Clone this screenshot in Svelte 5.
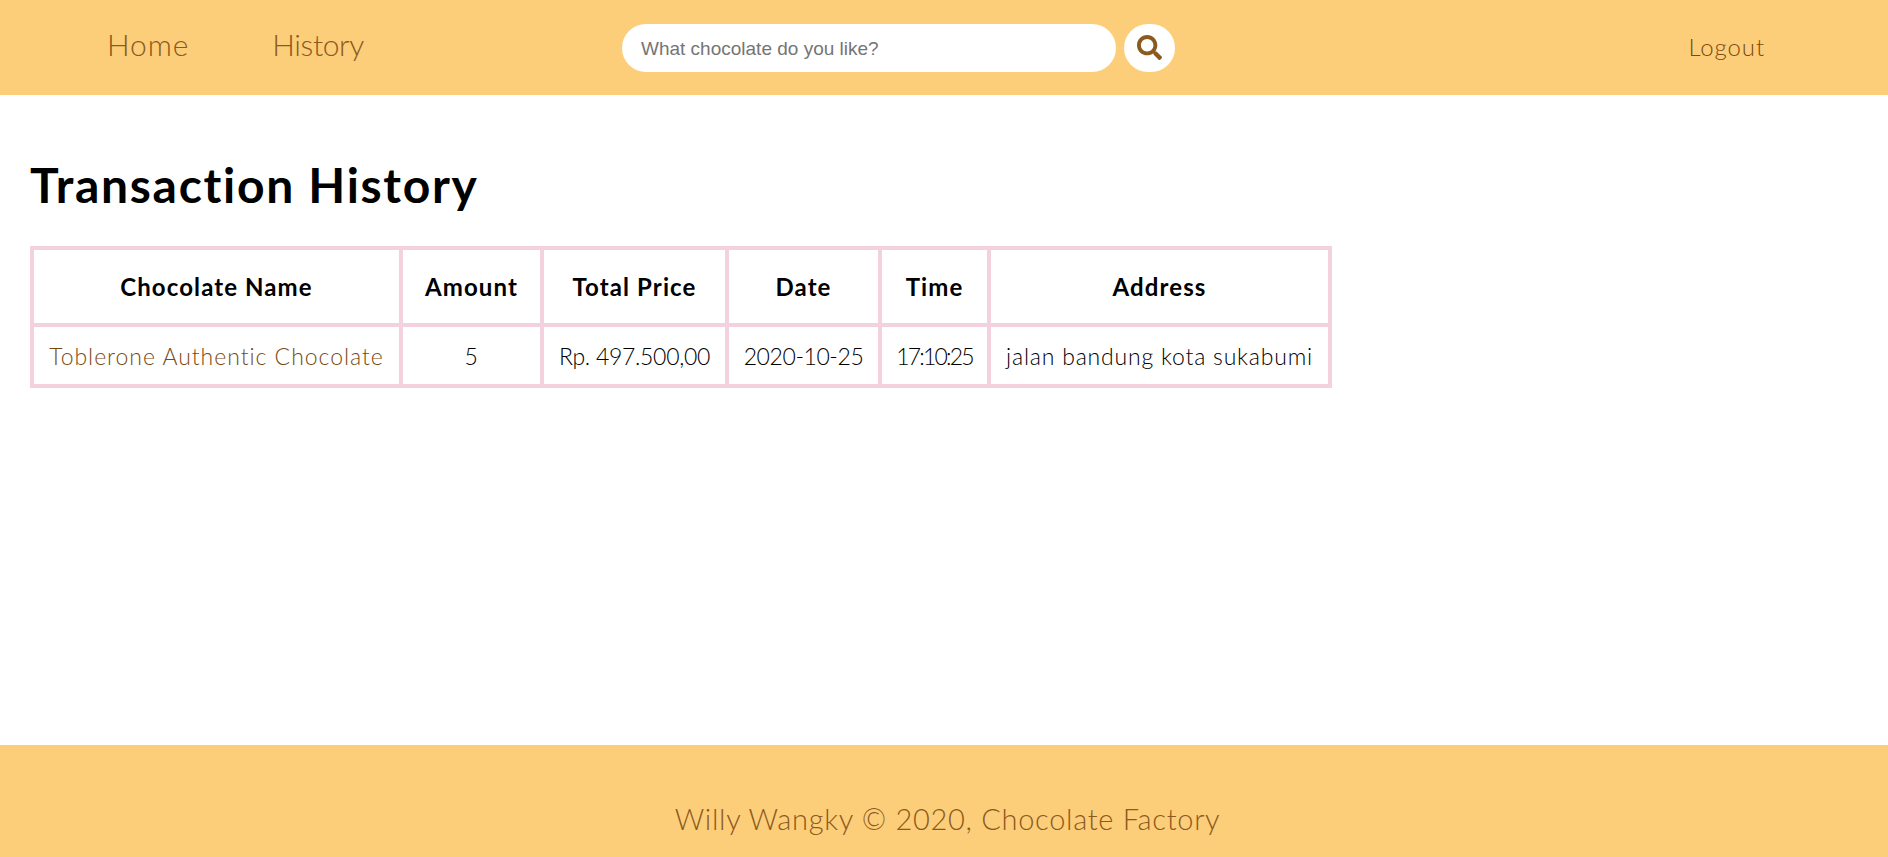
<script>
  const columns = [
    { label: 'Chocolate Name', width: 369 },
    { label: 'Amount', width: 141 },
    { label: 'Total Price', width: 185 },
    { label: 'Date', width: 153 },
    { label: 'Time', width: 109 },
    { label: 'Address', width: 341 }
  ]
</script>

<div class="page">
  <header class="navbar">
    <nav class="links">
      <a href="#home">Home</a>
      <a class="history" href="#history">History</a>
    </nav>
    <form class="search" onsubmit={(e) => e.preventDefault()}>
      <input type="text" placeholder="What chocolate do you like?" />
      <button type="submit" aria-label="Search">
        <svg width="25" height="25" viewBox="0 0 512 512" fill="currentColor">
          <path d="M505 442.7L405.3 343c-4.5-4.5-10.6-7-17-7H372c27.6-35.3 44-79.7 44-128C416 93.1 322.9 0 208 0S0 93.1 0 208s93.1 208 208 208c48.3 0 92.7-16.4 128-44v16.3c0 6.4 2.5 12.5 7 17l99.7 99.7c9.4 9.4 24.6 9.4 33.9 0l28.3-28.3c9.4-9.4 9.4-24.6.1-34zM208 336c-70.7 0-128-57.2-128-128 0-70.7 57.2-128 128-128 70.7 0 128 57.2 128 128 0 70.7-57.2 128-128 128z"/>
        </svg>
      </button>
    </form>
    <a class="logout" href="#logout">Logout</a>
  </header>

  <main class="content">
    <h1>Transaction History</h1>
    <table>
      <colgroup>
        {#each columns as col}
          <col style="width: {col.width}px" />
        {/each}
      </colgroup>
      <thead>
        <tr>
          {#each columns as col}
            <th>{col.label}</th>
          {/each}
        </tr>
      </thead>
      <tbody>
        <tr>
          <td class="name"><a href="#detail">Toblerone Authentic Chocolate</a></td>
          <td>5</td>
          <td class="price">Rp. 497.500,00</td>
          <td class="date">2020-10-25</td>
          <td class="time">17:10:25</td>
          <td>jalan bandung kota sukabumi</td>
        </tr>
      </tbody>
    </table>
  </main>

  <footer class="footer">Willy Wangky © 2020, Chocolate Factory</footer>
</div>

<style>
  :global(body) {
    margin: 0;
    background: #fff;
    font-family: Lato, sans-serif;
    font-variant-ligatures: none;
  }

  .page {
    height: 857px;
    display: flex;
    flex-direction: column;
    overflow: hidden;
  }

  .navbar {
    height: 95px;
    background: #fdce79;
    display: flex;
    align-items: center;
    padding: 0 123px 0 107px;
    flex-shrink: 0;
  }

  .links {
    display: flex;
    gap: 83px;
    width: 515px;
    margin-top: -7px;
  }

  .links a {
    color: #8b5a1e;
    text-decoration: none;
    font-size: 30px;
    font-weight: 300;
    letter-spacing: 0.9px;
  }

  .links .history {
    letter-spacing: -0.4px;
  }

  .search {
    display: flex;
    align-items: center;
    gap: 8px;
  }

  .search input {
    width: 494px;
    height: 48px;
    box-sizing: border-box;
    border: none;
    border-radius: 24px;
    padding: 2px 19px 0;
    background: #fff;
    font-family: "Liberation Sans", Arial, sans-serif;
    font-size: 19px;
  }

  .search input::placeholder {
    color: #757575;
    opacity: 1;
  }

  .search button {
    width: 51px;
    height: 48px;
    border: none;
    border-radius: 24px;
    background: #fff;
    color: #8b5a1e;
    padding: 0;
    display: flex;
    align-items: center;
    justify-content: center;
  }

  .logout {
    margin-left: auto;
    margin-top: -2px;
    color: #7a4a10;
    text-decoration: none;
    font-size: 24px;
    font-weight: 300;
    letter-spacing: 0.9px;
  }

  .content {
    flex: 1;
    padding: 0 30px;
  }

  h1 {
    margin: 61px 0 32px;
    font-size: 48px;
    font-weight: 700;
    line-height: 58px;
    color: #000;
    letter-spacing: 1.7px;
  }

  table {
    border-collapse: collapse;
    table-layout: fixed;
    width: 1298px;
    border: 4px solid #f3d1de;
    font-size: 23px;
    color: #000;
  }

  th, td {
    border: 4px solid #f3d1de;
    text-align: center;
    padding: 0;
  }

  th {
    height: 73px;
    font-weight: 700;
    font-size: 24px;
    letter-spacing: 1.1px;
  }

  td {
    height: 57px;
    font-weight: 300;
    letter-spacing: 0.8px;
    white-space: nowrap;
  }

  td.name {
    letter-spacing: 0.97px;
  }

  td.price {
    letter-spacing: -0.3px;
  }

  td.date {
    letter-spacing: -0.4px;
  }

  td.time {
    letter-spacing: -1.8px;
  }

  td a {
    color: #7a4a10;
    text-decoration: none;
  }

  .footer {
    height: 112px;
    background: #fdce79;
    color: #8b5a1e;
    font-size: 29px;
    font-weight: 300;
    letter-spacing: 0.7px;
    text-align: center;
    line-height: 148px;
    padding-left: 7px;
    flex-shrink: 0;
  }
</style>
